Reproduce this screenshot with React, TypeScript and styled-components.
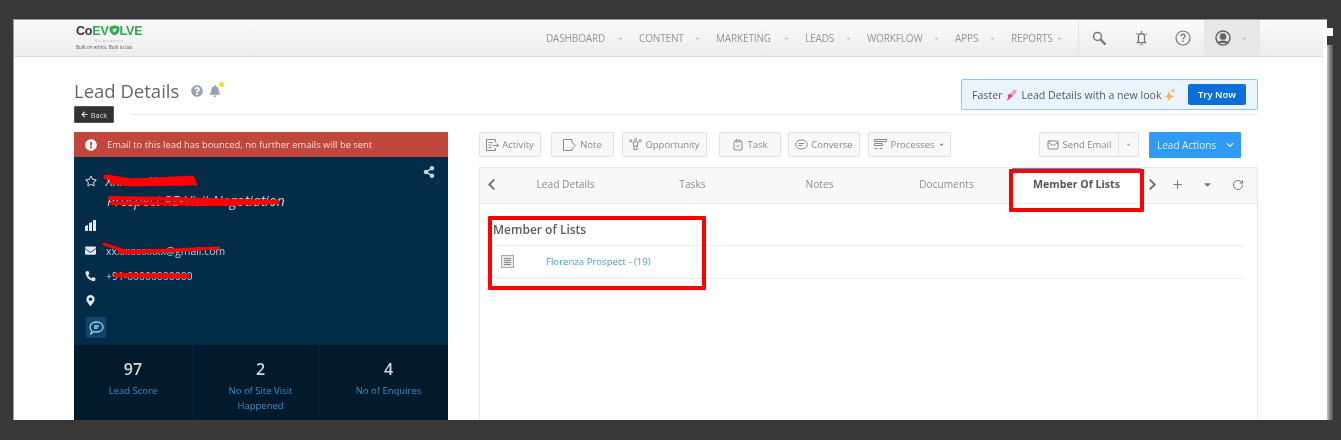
import React from "react";
import styled, { createGlobalStyle } from "styled-components";
import {
  FaArrowLeft,
  FaBell,
  FaCaretDown,
  FaChevronDown,
  FaChevronLeft,
  FaChevronRight,
  FaEnvelope,
  FaExclamationCircle,
  FaMapMarkerAlt,
  FaPhoneAlt,
  FaQuestionCircle,
  FaRegStar,
  FaShareAlt,
} from "react-icons/fa";
import { ClipboardCheck, Mail, Plus, RotateCw } from "lucide-react";

const GlobalStyle = createGlobalStyle`
  html, body {
    margin: 0;
    height: 440px;
    overflow: hidden;
    background: #383838;
    font-family: "Open Sans", "Liberation Sans", sans-serif;
  }
`;

const Frame = styled.div`
  position: relative;
  display: flex;
  margin: 19px 0 0 13px;
  width: 1320px;
  height: 401px;
  overflow: hidden;
  filter: blur(0.7px);
`;

const Page = styled.div`
  box-sizing: border-box;
  width: 1314px;
  background: #fff;
  border-top: 1px solid #9a9a9a;
  border-left: 1px solid #9a9a9a;
`;

const ScrollStrip = styled.div`
  position: relative;
  flex: 1;
  margin-top: 26px;
  background: linear-gradient(90deg, #c8c8c8, #777 60%, #555);
  &::before {
    content: "";
    position: absolute;
    left: 0;
    right: 0;
    top: -17px;
    height: 8px;
    background: #fff;
  }
`;

const TopBar = styled.header`
  display: flex;
  align-items: center;
  box-sizing: border-box;
  height: 37px;
  margin-right: 4px;
  padding-left: 62px;
  background: linear-gradient(#fbfbfb, #ececec);
  border-bottom: 1px solid #dcdcdc;
`;

const Logo = styled.div`
  width: 470px;
  display: flex;
  flex-direction: column;
  margin-top: -2px;
`;

const LogoWord = styled.div`
  display: flex;
  align-items: center;
  font-family: "Liberation Sans", sans-serif;
  font-size: 12.5px;
  line-height: 14px;
  font-weight: 700;
  color: #2fa84f;
  letter-spacing: -0.2px;
  span {
    color: #333;
  }
`;

const LogoSub = styled.div`
  font-size: 4px;
  line-height: 6px;
  color: #999;
  letter-spacing: 1.6px;
  padding-left: 19px;
`;

const LogoTag = styled.div`
  font-size: 4.6px;
  line-height: 7px;
  color: #555;
`;

const NavItem = styled.div<{ $w: number }>`
  display: flex;
  align-items: center;
  font-size: 10px;
  letter-spacing: -0.15px;
  color: #959595;
  width: ${(p) => p.$w}px;
  svg {
    color: #c4c4c4;
    margin-left: auto;
    margin-right: 15px;
  }
`;

const NavIcons = styled.div`
  display: flex;
  align-items: center;
  height: 100%;
  border-left: 1px solid #e2e2e2;
`;

const NavIcon = styled.div`
  display: flex;
  align-items: center;
  justify-content: center;
  width: 41.6px;
  height: 100%;
  color: #777;
`;

const UserCell = styled.div`
  display: flex;
  align-items: center;
  gap: 10px;
  box-sizing: border-box;
  height: 100%;
  width: 56px;
  padding-left: 11px;
  background: #e8e8e8;
  color: #666;
  svg:last-child {
    color: #bbb;
  }
`;

const Content = styled.main`
  padding: 22px 69px 0 60px;
`;

const HeadRow = styled.div`
  display: flex;
  justify-content: space-between;
  height: 27px;
`;

const TitleWrap = styled.div`
  display: flex;
  align-items: center;
  height: 23px;
  color: #9aa3ab;
`;

const Title = styled.h1`
  margin: 0 12px 0 0;
  font-size: 18.5px;
  font-weight: 400;
  color: #666;
`;

const BellWrap = styled.span`
  position: relative;
  display: flex;
  margin-left: 6px;
  &::after {
    content: "";
    position: absolute;
    top: -3px;
    right: -3px;
    width: 5px;
    height: 5px;
    border-radius: 50%;
    background: #f5e10a;
  }
`;

const Banner = styled.div`
  display: flex;
  align-items: center;
  box-sizing: border-box;
  height: 31px;
  width: 297px;
  padding: 0 11px 0 10px;
  background: #ebf4fd;
  border: 1px solid #8fc5f3;
  border-radius: 2px;
  font-size: 10.6px;
  color: #4d5968;
`;

const BannerText = styled.span`
  display: flex;
  align-items: center;
  gap: 4px;
  flex: 1;
  white-space: nowrap;
`;

const TryNow = styled.button`
  width: 58px;
  height: 21px;
  padding: 0;
  border: 0;
  border-radius: 2px;
  background: #0a6fd6;
  color: #fff;
  font: 600 9.5px "Open Sans", sans-serif;
`;

const BackRow = styled.div`
  display: flex;
  align-items: center;
  gap: 17px;
  height: 17px;
  margin-bottom: 9px;
`;

const BackButton = styled.button`
  display: flex;
  align-items: center;
  justify-content: center;
  gap: 3px;
  width: 40px;
  height: 17px;
  padding: 0;
  border: 1px solid #555;
  border-radius: 1px;
  background: #333;
  color: #ddd;
  font: 400 7.5px "Open Sans", sans-serif;
`;

const Rule = styled.div`
  flex: 1;
  height: 1px;
  background: #ececec;
`;

const Columns = styled.div`
  display: grid;
  grid-template-columns: 374px 1fr;
  column-gap: 31px;
`;

const LeadCard = styled.aside`
  display: flex;
  flex-direction: column;
  height: 288px;
  background: #022c47;
  color: #ddd;
`;

const BounceAlert = styled.div`
  display: flex;
  align-items: center;
  gap: 10px;
  box-sizing: border-box;
  height: 25px;
  padding-left: 11px;
  background: #bf473d;
  color: #f7dcd9;
  font-size: 9.4px;
  svg {
    color: #fff;
  }
`;

const Profile = styled.div`
  position: relative;
  flex: 1;
  padding: 16px 11px 0;
`;

const ShareIcon = styled.span`
  position: absolute;
  top: 9px;
  right: 13px;
  color: #c9d3da;
  display: flex;
`;

const NameRow = styled.div`
  display: flex;
  align-items: center;
  gap: 8px;
  height: 16px;
  font-size: 13px;
  color: #c9d0d6;
`;

const Stage = styled.div`
  margin: 4px 0 4px 22px;
  height: 16px;
  font-size: 14px;
  line-height: 16px;
  font-style: italic;
  color: #c9d0d6;
`;

const InfoRow = styled.div`
  display: flex;
  align-items: center;
  gap: 10px;
  height: 25px;
  font-size: 10.4px;
  color: #c7d0d7;
  svg {
    color: #e4e8eb;
    width: 11px;
  }
`;

const ChatChip = styled.div`
  display: flex;
  align-items: center;
  justify-content: center;
  width: 20px;
  height: 21px;
  margin: 4px 0 0 1px;
  background: #0f466c;
  color: #a9cfe6;
`;

const Stats = styled.div`
  display: grid;
  grid-template-columns: 118px 127px 1fr;
  height: 75px;
  background: #021a2c;
`;

const Stat = styled.div`
  padding-top: 14px;
  text-align: center;
  & + & {
    padding-left: 9px;
    border-left: 1px solid #03243b;
  }
`;

const StatValue = styled.div`
  font-size: 16px;
  line-height: 20px;
  font-weight: 600;
  color: #d5d9dc;
`;

const StatLabel = styled.div`
  margin-top: 4px;
  font-size: 9.5px;
  line-height: 15px;
  color: #3f8cc6;
`;

const RightColumn = styled.section`
  display: flex;
  flex-direction: column;
  min-width: 0;
`;

const ActionBar = styled.div`
  display: flex;
  align-items: flex-start;
  height: 35px;
`;

const ActionButton = styled.button<{ $w: number; $gap: number }>`
  display: flex;
  align-items: center;
  justify-content: center;
  gap: 3px;
  box-sizing: border-box;
  width: ${(p) => p.$w}px;
  height: 25px;
  margin-right: ${(p) => p.$gap}px;
  padding: 0;
  background: #f8f8f8;
  border: 1px solid #e0e0e0;
  border-radius: 2px;
  color: #8a8a8a;
  font: 400 9.5px "Open Sans", sans-serif;
  white-space: nowrap;
`;

const SendEmail = styled.div`
  display: flex;
  box-sizing: border-box;
  width: 100px;
  height: 25px;
  margin: 0 10px 0 auto;
  background: #f8f8f8;
  border: 1px solid #e0e0e0;
  border-radius: 2px;
  color: #8a8a8a;
  font-size: 9.5px;
`;

const SendLabel = styled.div`
  display: flex;
  align-items: center;
  justify-content: center;
  gap: 4px;
  width: 78px;
  border-right: 1px solid #e0e0e0;
`;

const SendCaret = styled.div`
  flex: 1;
  display: flex;
  align-items: center;
  justify-content: center;
  color: #aaa;
`;

const LeadActions = styled.button`
  display: flex;
  align-items: center;
  justify-content: space-between;
  box-sizing: border-box;
  width: 92px;
  height: 26px;
  margin-right: 17px;
  padding: 0 7px 0 8px;
  border: 0;
  border-radius: 1px;
  background: #2f9bf5;
  color: #d9edfd;
  font: 400 10px "Open Sans", sans-serif;
`;

const TabPanel = styled.div`
  flex: 1;
  height: 253px;
  border: 1px solid #e7e7e7;
  border-bottom: 0;
`;

const TabBar = styled.div`
  display: flex;
  align-items: center;
  height: 35px;
  background: #f8f8f8;
  border-bottom: 1px solid #ececec;
  color: #888;
`;

const TabArrow = styled.div<{ $w: number }>`
  display: flex;
  align-items: center;
  justify-content: center;
  width: ${(p) => p.$w}px;
  height: 100%;
  margin-top: -2px;
  color: #777;
`;

const Tab = styled.div<{ $active?: boolean }>`
  box-sizing: border-box;
  width: ${(p) => (p.$active ? 129 : 127)}px;
  margin-left: ${(p) => (p.$active ? 2 : 0)}px;
  height: 35px;
  line-height: 29px;
  text-align: center;
  font-size: ${(p) => (p.$active ? 10.6 : 10.2)}px;
  font-weight: ${(p) => (p.$active ? 700 : 400)};
  color: ${(p) => (p.$active ? "#555" : "#8d8d8d")};
  background: ${(p) => (p.$active ? "#fff" : "transparent")};
  border-top: 2px solid ${(p) => (p.$active ? "#2f9bf5" : "transparent")};
`;

const ListBody = styled.div`
  padding: 15px 13px 0;
`;

const ListHeading = styled.h3`
  margin: 0;
  height: 26px;
  font-size: 12px;
  line-height: 22px;
  font-weight: 600;
  color: #5c5c5c;
  border-bottom: 1px solid #eee;
`;

const ListRow = styled.div`
  display: flex;
  align-items: center;
  box-sizing: border-box;
  height: 33px;
  padding: 0 0 2px 8px;
  border-bottom: 1px solid #eee;
  color: #999;
`;

const ListLink = styled.a`
  margin-left: 32px;
  font-size: 9.6px;
  color: #3f9fdb;
`;

const RedBox = styled.div<{ $x: number; $y: number; $w: number; $h: number }>`
  position: absolute;
  box-sizing: border-box;
  left: ${(p) => p.$x}px;
  top: ${(p) => p.$y}px;
  width: ${(p) => p.$w}px;
  height: ${(p) => p.$h}px;
  border: 4px solid #f00;
  border-radius: 1px;
`;

const Scribble = styled.svg`
  position: absolute;
  left: 0;
  top: 0;
  pointer-events: none;
`;

const navItems: [string, number][] = [
  ["DASHBOARD", 93],
  ["CONTENT", 77],
  ["MARKETING", 89],
  ["LEADS", 62],
  ["WORKFLOW", 88],
  ["APPS", 56],
  ["REPORTS", 67],
];

const LeafGlyph = () => (
  <svg width="11" height="11" viewBox="0 0 11 11">
    <path d="M5.500 10.500C1.500 9 .5 6 .5 3.500 .5 1.500 2.500.5 5.500.5S10.500 1.500 10.500 3.500C10.500 6 9.500 9 5.500 10.500z" fill="#2fa84f" />
    <path d="M5.500 7.500C4 6.500 3 5.500 3.500 4.300 4.500 3.500 6.500 3.500 8 3.500 7.500 5.500 7 6.500 5.500 7.500z" fill="#bfe6c6" />
  </svg>
);

const SearchGlyph = () => (
  <svg width="15" height="15" viewBox="0 0 15 15" fill="none" stroke="currentColor">
    <circle cx="5.500" cy="5.500" r="4" strokeWidth="1.500" />
    <path d="M8.500 8.500l5 5" strokeWidth="2.400" />
  </svg>
);

const AlarmGlyph = () => (
  <svg width="15" height="16" viewBox="0 0 15 16" fill="none" stroke="currentColor" strokeWidth="1.300">
    <path d="M4.500 11.500V6.500a3 3 0 0 1 6 0v5l1 1.200h-8z" />
    <path d="M6.500 14.500h2" />
    <path d="M7.500 1v1.500M2.500 3.500l1 1M12.500 3.500l-1 1" />
  </svg>
);

const HelpGlyph = () => (
  <svg width="16" height="16" viewBox="0 0 16 16" fill="none" stroke="currentColor">
    <circle cx="8" cy="8" r="7" strokeWidth="1.200" />
    <path d="M6 6.200c0-2.600 4-2.600 4 0 0 1.500-2 1.500-2 3" strokeWidth="1.400" />
    <path d="M8 10.500v1.500" strokeWidth="1.400" />
  </svg>
);

const UserGlyph = () => (
  <svg width="16" height="16" viewBox="0 0 16 16" fill="none" stroke="currentColor" strokeWidth="1.500">
    <circle cx="8" cy="8" r="7" />
    <circle cx="8" cy="6.500" r="2.600" fill="currentColor" />
    <path d="M3.500 13c1-2.400 8-2.400 9 0" fill="currentColor" />
  </svg>
);

const BuildingGlyph = () => (
  <svg width="11" height="11" viewBox="0 0 11 11" fill="currentColor">
    <path d="M0 11V6l3-1v6zM4 11V3l3-1v9zM8 11V0h3v11z" />
  </svg>
);

const ActivityGlyph = () => (
  <svg width="13" height="12" viewBox="0 0 13 12" fill="none" stroke="currentColor">
    <path d="M9.500 3.500v-3h-9v11h9V9" />
    <path d="M2.500 3.500h4M2.500 6h3M2.500 8.500h3M6.500 6.500h6M10.500 4.500l2 2-2 2" />
  </svg>
);

const NoteGlyph = () => (
  <svg width="14" height="12" viewBox="0 0 14 12" fill="none" stroke="currentColor">
    <path d="M.5.5h8.500v3l3.500 3-3.500 3v2H.5z" />
  </svg>
);

const OpportunityGlyph = () => (
  <svg width="13" height="13" viewBox="0 0 13 13" fill="none" stroke="currentColor">
    <path d="M4 4h5l-.7 4H4.700z" />
    <path d="M5 8v3.500h3V8" />
    <circle cx="1.800" cy="2.800" r="1.100" />
    <circle cx="6.500" cy="1.500" r="1.100" />
    <circle cx="11.200" cy="2.800" r="1.100" />
  </svg>
);

const ConverseGlyph = () => (
  <svg width="13" height="12" viewBox="0 0 13 12" fill="none" stroke="currentColor">
    <ellipse cx="6.500" cy="5.500" rx="6" ry="4.500" />
    <path d="M3.500 4.500h6M3.500 6.500h4" />
  </svg>
);

const ProcessGlyph = () => (
  <svg width="13" height="13" viewBox="0 0 13 13" fill="none" stroke="currentColor">
    <path d="M.5 1.500h12v2H.5zM.5 5.500h8v2h-8zM.5 10.500h3M5.500 10.500h3" />
  </svg>
);

const ListGlyph = () => (
  <svg width="13" height="13" viewBox="0 0 13 13">
    <rect x=".5" y=".5" width="12" height="12" fill="#e9e9e9" stroke="#aaa" />
    <path d="M3 3.500h7M3 5.500h7M3 7.500h7M3 9.500h7" stroke="#888" />
  </svg>
);

const ChatGlyph = () => (
  <svg width="15" height="14" viewBox="0 0 15 14" fill="none" stroke="currentColor" strokeWidth="1.300">
    <path d="M7.500 1C11.500 1 14 3.200 14 6s-2.500 5-6.500 5c-1 0-1.800-.1-2.600-.4L2 12.800l.6-3.300C1.500 8.500 1 7.300 1 6c0-2.800 2.500-5 6.500-5z" />
    <path d="M5 5h5M5 7h3.500" />
  </svg>
);

const Rocket = () => (
  <svg width="11" height="12" viewBox="0 0 11 12">
    <path d="M10.500.5 7.500 1 4 5.500l2 2 4-3.500z" fill="#f0a0b8" />
    <path d="M4 4.500 1.500 6.500l1.500 3 3.500-2z" fill="#e93a78" />
    <path d="M2.500 8 .5 11.500 4 10z" fill="#d8467f" />
  </svg>
);

const Spark = () => (
  <svg width="11" height="13" viewBox="0 0 11 13" fill="#f8b45c">
    <path d="M4 3 5.500 7l4 1.500-4 1.500-1.500 3-1.500-3L0 8.500 2.500 7z" />
    <path d="M8 0l.7 2 1.800.7-1.800.7L8 5.500l-.7-2.100-1.800-.7 1.800-.7z" />
  </svg>
);

const App = () => (
  <>
    <GlobalStyle />
    <Frame>
      <Page>
        <TopBar>
          <Logo>
            <LogoWord>
              <span>Co</span>EV
              <LeafGlyph />
              LVE
            </LogoWord>
            <LogoSub>Ventures</LogoSub>
            <LogoTag>Built on ethics. Built to last</LogoTag>
          </Logo>
          {navItems.map(([label, w]) => (
            <NavItem key={label} $w={w}>
              {label}
              <FaCaretDown size={7} />
            </NavItem>
          ))}
          <NavIcons>
            <NavIcon>
              <SearchGlyph />
            </NavIcon>
            <NavIcon>
              <AlarmGlyph />
            </NavIcon>
            <NavIcon>
              <HelpGlyph />
            </NavIcon>
            <UserCell>
              <UserGlyph />
              <FaCaretDown size={7} />
            </UserCell>
          </NavIcons>
        </TopBar>
        <Content>
          <HeadRow>
            <TitleWrap>
              <Title>Lead Details</Title>
              <FaQuestionCircle size={12} />
              <BellWrap>
                <FaBell size={12} />
              </BellWrap>
            </TitleWrap>
            <Banner>
              <BannerText>
                Faster <Rocket /> Lead Details with a new look <Spark />
              </BannerText>
              <TryNow>Try Now</TryNow>
            </Banner>
          </HeadRow>
          <BackRow>
            <BackButton>
              <FaArrowLeft size={7} /> Back
            </BackButton>
            <Rule />
          </BackRow>
          <Columns>
            <LeadCard>
              <BounceAlert>
                <FaExclamationCircle size={12} />
                Email to this lead has bounced, no further emails will be sent
              </BounceAlert>
              <Profile>
                <ShareIcon>
                  <FaShareAlt size={12} />
                </ShareIcon>
                <NameRow>
                  <FaRegStar size={12} />
                  Xxxxxx Xxx
                </NameRow>
                <Stage>Prospect RE-Visit Negotiation</Stage>
                <InfoRow>
                  <BuildingGlyph />
                </InfoRow>
                <InfoRow>
                  <FaEnvelope size={11} />
                  xxxxxxxxxxx@gmail.com
                </InfoRow>
                <InfoRow>
                  <FaPhoneAlt size={10} />
                  +91-00000000000
                </InfoRow>
                <InfoRow>
                  <FaMapMarkerAlt size={11} />
                </InfoRow>
                <ChatChip>
                  <ChatGlyph />
                </ChatChip>
              </Profile>
              <Stats>
                <Stat>
                  <StatValue>97</StatValue>
                  <StatLabel>Lead Score</StatLabel>
                </Stat>
                <Stat>
                  <StatValue>2</StatValue>
                  <StatLabel>
                    No of Site Visit
                    <br />
                    Happened
                  </StatLabel>
                </Stat>
                <Stat>
                  <StatValue>4</StatValue>
                  <StatLabel>No of Enquires</StatLabel>
                </Stat>
              </Stats>
            </LeadCard>
            <RightColumn>
              <ActionBar>
                <ActionButton $w={62} $gap={10}>
                  <ActivityGlyph /> Activity
                </ActionButton>
                <ActionButton $w={63} $gap={8}>
                  <NoteGlyph /> Note
                </ActionButton>
                <ActionButton $w={85} $gap={12}>
                  <OpportunityGlyph /> Opportunity
                </ActionButton>
                <ActionButton $w={62} $gap={7}>
                  <ClipboardCheck size={12} /> Task
                </ActionButton>
                <ActionButton $w={72} $gap={8}>
                  <ConverseGlyph /> Converse
                </ActionButton>
                <ActionButton $w={83} $gap={0}>
                  <ProcessGlyph /> Processes <FaCaretDown size={7} />
                </ActionButton>
                <SendEmail>
                  <SendLabel>
                    <Mail size={12} /> Send Email
                  </SendLabel>
                  <SendCaret>
                    <FaCaretDown size={7} />
                  </SendCaret>
                </SendEmail>
                <LeadActions>
                  Lead Actions <FaChevronDown size={8} />
                </LeadActions>
              </ActionBar>
              <TabPanel>
                <TabBar>
                  <TabArrow $w={22}>
                    <FaChevronLeft size={13} />
                  </TabArrow>
                  <Tab>Lead Details</Tab>
                  <Tab>Tasks</Tab>
                  <Tab>Notes</Tab>
                  <Tab>Documents</Tab>
                  <Tab $active>Member Of Lists</Tab>
                  <TabArrow $w={22}>
                    <FaChevronRight size={13} />
                  </TabArrow>
                  <TabArrow $w={28}>
                    <Plus size={13} />
                  </TabArrow>
                  <TabArrow $w={33}>
                    <FaCaretDown size={11} />
                  </TabArrow>
                  <TabArrow $w={28}>
                    <RotateCw size={12} />
                  </TabArrow>
                </TabBar>
                <ListBody>
                  <ListHeading>Member of Lists</ListHeading>
                  <ListRow>
                    <ListGlyph />
                    <ListLink>Florenza Prospect - (19)</ListLink>
                  </ListRow>
                </ListBody>
              </TabPanel>
            </RightColumn>
          </Columns>
        </Content>
      </Page>
      <ScrollStrip />
      <Scribble width="1320" height="401" viewBox="13 19 1320 401">
        <g fill="none" stroke="#f00" strokeLinecap="round">
          <path d="M106 177 L132 181 L192 178 L194 183 L130 184 L112 182" strokeWidth="5" />
          <path d="M110 198 L178 199 L279 202 L220 204 L112 203" strokeWidth="4" />
          <path d="M104 244 L122 250 L118 252 L220 248 L125 253" strokeWidth="3" />
          <path d="M116 275 L188 276" strokeWidth="4.500" />
        </g>
      </Scribble>
      <RedBox $x={996} $y={150} $w={135} $h={43} />
      <RedBox $x={475} $y={197} $w={218} $h={74} />
    </Frame>
  </>
);

export default App;
